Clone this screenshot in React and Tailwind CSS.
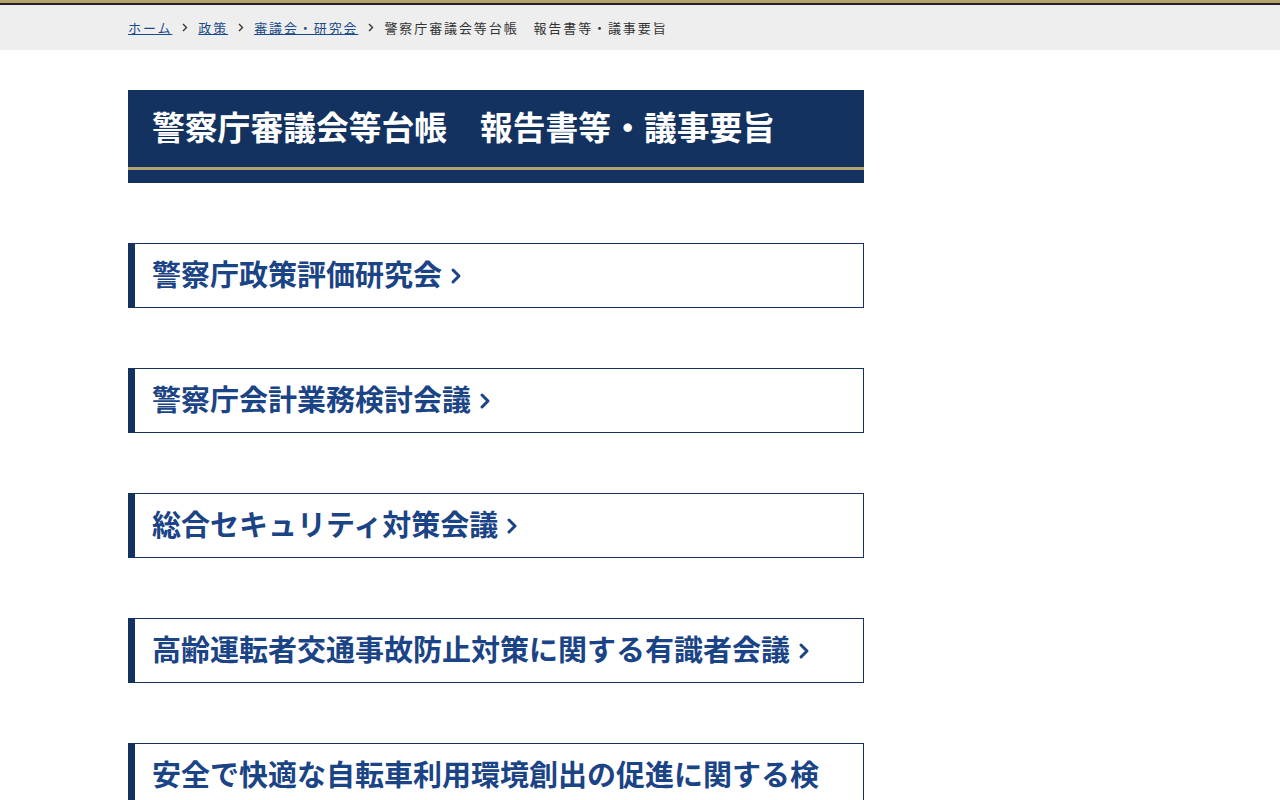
import React from "react";

const items = [
  "警察庁政策評価研究会",
  "警察庁会計業務検討会議",
  "総合セキュリティ対策会議",
  "高齢運転者交通事故防止対策に関する有識者会議",
  "安全で快適な自転車利用環境創出の促進に関する検討会",
];

function Chevron({ className }) {
  return (
    <svg className={className} width="12" height="18" viewBox="0 0 12 18" fill="none">
      <path d="M3 3 L9 9 L3 15" stroke="currentColor" strokeWidth="3" strokeLinecap="round" strokeLinejoin="round" />
    </svg>
  );
}

function Sep() {
  return (
    <svg className="mx-[10px] text-[#333]" width="6" height="9" viewBox="0 0 6 9" fill="none">
      <path d="M1 1 L4.5 4.5 L1 8" stroke="currentColor" strokeWidth="1.4" />
    </svg>
  );
}

export default function App() {
  const font = { fontFamily: '"Noto Sans CJK JP", "Noto Sans", sans-serif' };
  return (
    <div className="min-h-[800px] bg-white" style={font}>
      <div className="h-[3px] bg-[#b4a36c]" />
      <div className="h-[2px] bg-[#222]" />
      <div className="h-[45px] bg-[#eeeeee] flex items-center pb-[1px]">
        <div className="pl-[128px] flex items-center text-[13px] tracking-[1.9px] text-[#333] leading-none">
          <a className="underline text-[#1a4a8a]">ホーム</a>
          <Sep />
          <a className="underline text-[#1a4a8a]">政策</a>
          <Sep />
          <a className="underline text-[#1a4a8a]">審議会・研究会</a>
          <Sep />
          <span>警察庁審議会等台帳　報告書等・議事要旨</span>
        </div>
      </div>

      <div className="ml-[128px] w-[736px] pt-[40px]">
        <div className="bg-[#14325f]">
          <div className="h-[77px] flex items-center pl-[24px] pb-[4px]">
            <h1 className="text-white font-bold text-[32.8px] leading-none">警察庁審議会等台帳　報告書等・議事要旨</h1>
          </div>
          <div className="h-[3px] bg-[#b4a36c]" />
          <div className="h-[13px]" />
        </div>

        <div className="flex flex-col gap-[60px] mt-[60px]">
          {items.map((t) => (
            <a
              key={t}
              className="block border border-[#14325f] border-l-[7px] pl-[17px] pr-[18px] pt-[7px] pb-[12px] text-[#1b4486] font-bold text-[29px] leading-[44px]"
            >
              {t}
              <Chevron className="inline-block ml-[8px] align-[1px]" />
            </a>
          ))}
        </div>
        <div className="h-[60px]" />
      </div>
    </div>
  );
}
